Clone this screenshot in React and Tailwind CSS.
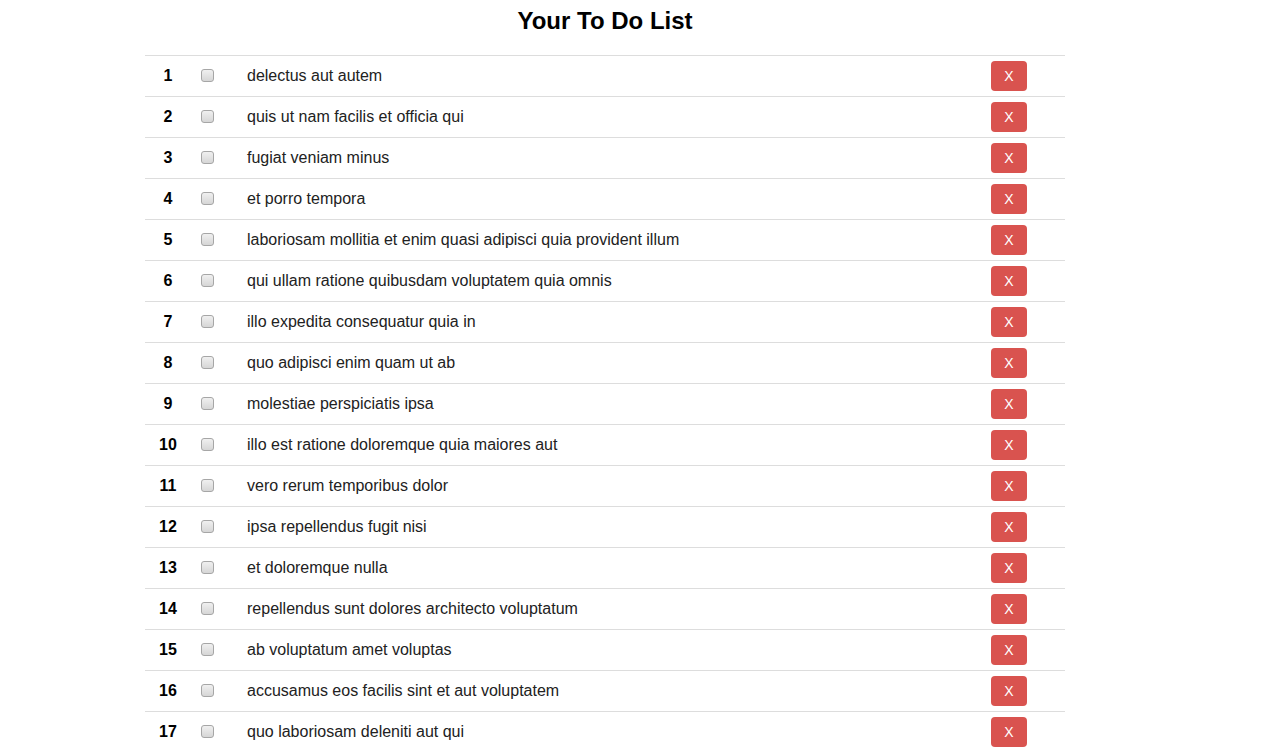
import React from 'react';

const TODOS = [
    'delectus aut autem',
    'quis ut nam facilis et officia qui',
    'fugiat veniam minus',
    'et porro tempora',
    'laboriosam mollitia et enim quasi adipisci quia provident illum',
    'qui ullam ratione quibusdam voluptatem quia omnis',
    'illo expedita consequatur quia in',
    'quo adipisci enim quam ut ab',
    'molestiae perspiciatis ipsa',
    'illo est ratione doloremque quia maiores aut',
    'vero rerum temporibus dolor',
    'ipsa repellendus fugit nisi',
    'et doloremque nulla',
    'repellendus sunt dolores architecto voluptatum',
    'ab voluptatum amet voluptas',
    'accusamus eos facilis sint et aut voluptatem',
    'quo laboriosam deleniti aut qui',
];

const Checkbox = () => (
    <span className="block w-[13px] h-[13px] mb-[2px] rounded-[3px] border border-[#a6a6a6] bg-gradient-to-b from-[#f0f0f0] to-[#d6d6d6]" />
);

const App = () => {
    return (
        <div className="min-h-screen bg-white text-[#333] font-['Liberation_Sans',Arial,sans-serif]">
            <div className="w-[920px] ml-[145px]">
                <h2 className="text-center text-[24px] font-bold text-black leading-[24px] pt-[9px] pb-[22px]">Your To Do List</h2>
                <div>
                    {TODOS.map((title, i) => (
                        <div key={i} className="flex items-center h-[41px] border-t border-[#dddddd]">
                            <div className="w-[46px] text-center font-bold text-[16px] text-black">{i + 1}</div>
                            <div className="w-[32px] flex justify-center">
                                <Checkbox />
                            </div>
                            <div className="flex-1 pl-[24px] text-[16px] text-[#222]">{title}</div>
                            <div className="w-[74px] pr-[38px]">
                                <button className="w-[36px] h-[30px] rounded-[4px] bg-[#d9534f] text-white text-[14px] leading-none">X</button>
                            </div>
                        </div>
                    ))}
                </div>
            </div>
        </div>
    );
};

export default App;
